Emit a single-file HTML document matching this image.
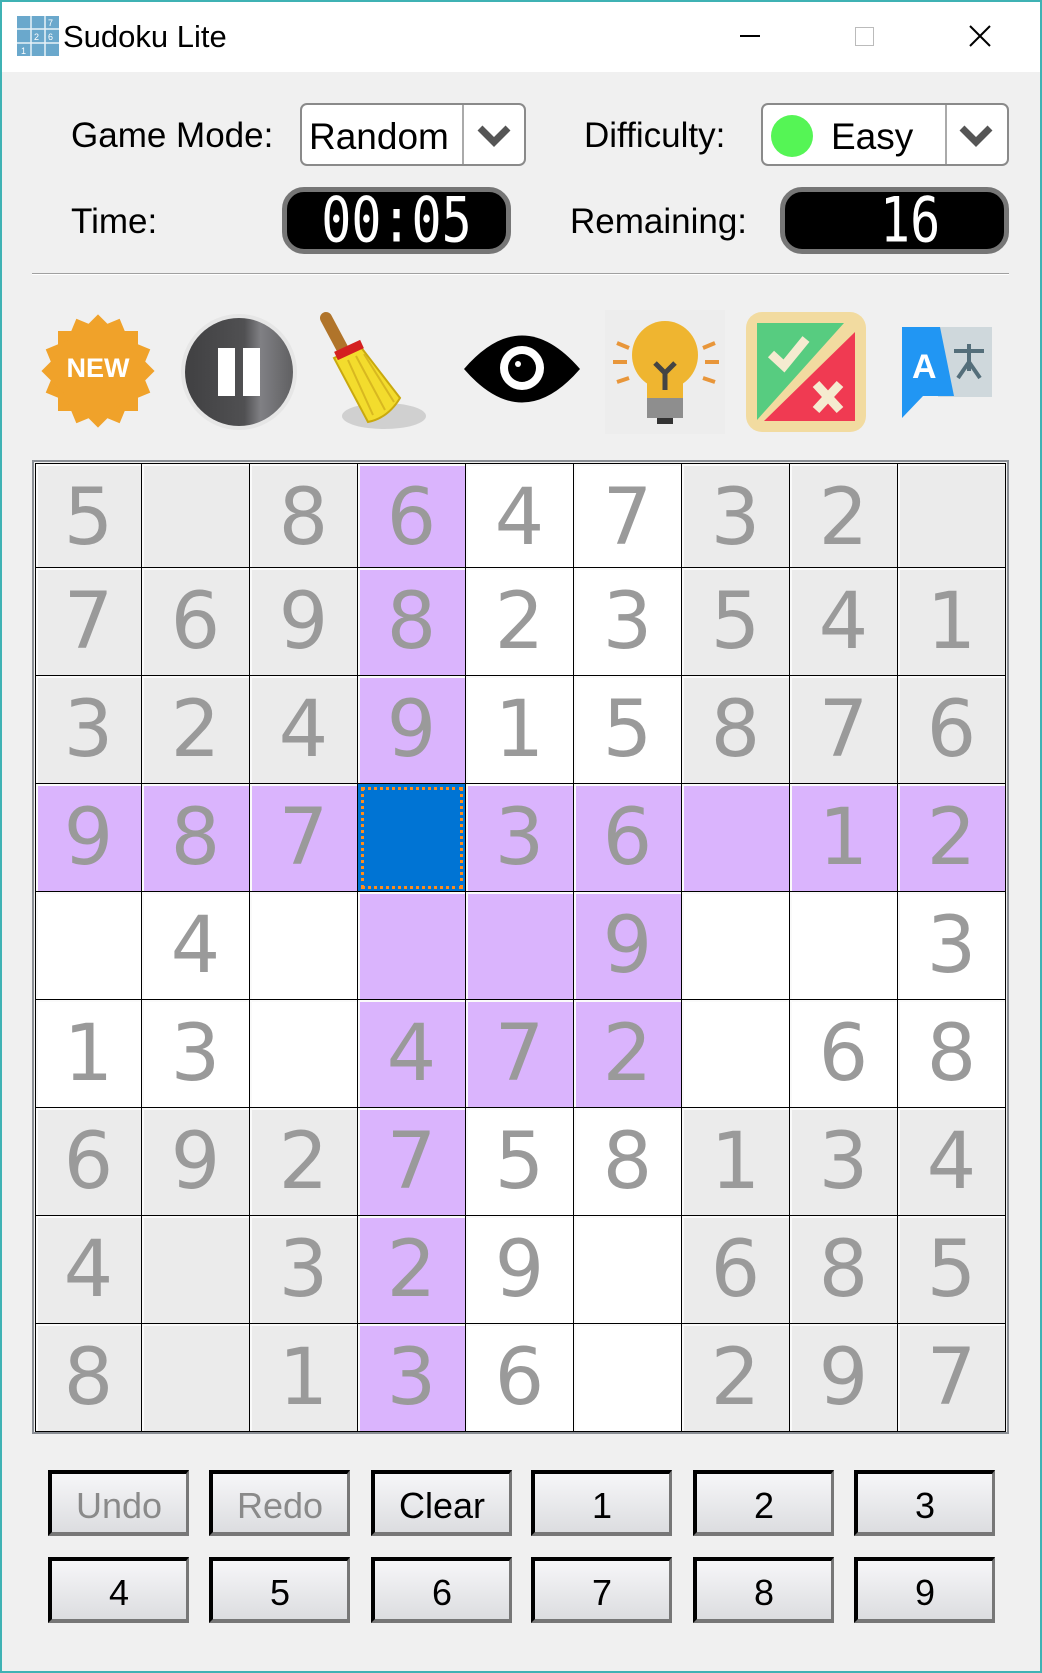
<!DOCTYPE html>
<html><head><meta charset="utf-8"><style>
*{margin:0;padding:0;box-sizing:border-box}
body{width:1042px;height:1673px;background:#f0f0f0;position:relative;overflow:hidden;font-family:"DejaVu Sans","Liberation Sans",sans-serif}
.frame{position:absolute;left:0;top:0;width:1042px;height:1673px;border:2px solid #3fb2b4;pointer-events:none;z-index:10}
.title{position:absolute;left:0;top:0;width:1042px;height:72px;background:#fff}
.abs{position:absolute}
.lbl{position:absolute;font-size:35px;color:#000;font-family:"Liberation Sans",sans-serif;line-height:40px}
.combo{position:absolute;background:#fff;border:2px solid #8a8a8a;border-radius:7px}
.lcd{position:absolute;background:#000;border:5px solid #767676;border-radius:22px;color:#fff;font-family:"DejaVu Sans Mono",monospace;font-size:50px;line-height:56px;text-align:center;letter-spacing:0px}
.lcd span{display:inline-block;transform:scaleY(1.25)}
.grid{position:absolute;left:35px;top:463px;display:grid;grid-template-columns:106px repeat(8,108px);grid-template-rows:104px repeat(8,108px);border-left:1px solid #000;border-top:1px solid #000}
.grid div{border-right:1.5px solid #000;border-bottom:1.5px solid #000;box-shadow:inset 2px 2px 0 #fafafa;font-size:78px;color:#9a9a9a;text-align:center;line-height:108px;font-family:"DejaVu Sans",sans-serif}
.g{background:#ebebeb}.w{background:#fff}.p{background:#dab4fd}
.grid div.s{background:#0074d4;box-shadow:none;outline:3px dotted #ff8c1a;outline-offset:-6px}
.btn{position:absolute;width:141px;height:66px;border-top:4px solid #000;border-left:4px solid #000;border-right:3px solid #777;border-bottom:4px solid #777;background:linear-gradient(#f6f6f8,#dcdde0);font-family:"Liberation Sans",sans-serif;font-size:36px;text-align:center;line-height:64px;color:#000}
.dis{color:#8a8a8a}
</style></head><body>
<div class="title"></div>
<svg class="abs" style="left:17px;top:16px" width="42" height="40" viewBox="0 0 42 40"><rect width="42" height="40" fill="#6aa8cc"/><g stroke="#e8f2f8" stroke-width="1.5"><line x1="14" y1="0" x2="14" y2="40"/><line x1="28" y1="0" x2="28" y2="40"/><line x1="0" y1="13" x2="42" y2="13"/><line x1="0" y1="27" x2="42" y2="27"/></g><g fill="#fff" font-size="9" font-family="Liberation Sans"><text x="31" y="10">7</text><text x="17" y="24">2</text><text x="31" y="24">6</text><text x="4" y="38">1</text></g></svg>
<div class="abs" style="left:63px;top:19px;font-size:31px;font-family:'Liberation Sans',sans-serif">Sudoku Lite</div>
<div class="abs" style="left:740px;top:35px;width:20px;height:2px;background:#000"></div>
<div class="abs" style="left:855px;top:27px;width:19px;height:19px;border:1.5px solid #bbb"></div>
<svg class="abs" style="left:969px;top:25px" width="22" height="22"><path d="M1 1L21 21M21 1L1 21" stroke="#000" stroke-width="2"/></svg>

<div class="lbl" style="left:71px;top:116px">Game Mode:</div>
<div class="combo" style="left:300px;top:103px;width:226px;height:63px"><div class="abs" style="left:7px;top:11px;font-size:37px;font-family:'Liberation Sans',sans-serif">Random</div><div class="abs" style="left:160px;top:0;width:2px;height:59px;background:#aaa"></div><svg class="abs" style="left:175px;top:20px" width="34" height="22"><path d="M3 3L17 17L31 3" stroke="#555" stroke-width="7" fill="none"/></svg></div>
<div class="lbl" style="left:584px;top:116px">Difficulty:</div>
<div class="combo" style="left:761px;top:103px;width:248px;height:63px"><div class="abs" style="left:8px;top:10px;width:42px;height:42px;border-radius:50%;background:#55f555"></div><div class="abs" style="left:68px;top:11px;font-size:37px;font-family:'Liberation Sans',sans-serif">Easy</div><div class="abs" style="left:182px;top:0;width:2px;height:59px;background:#aaa"></div><svg class="abs" style="left:196px;top:20px" width="34" height="22"><path d="M3 3L17 17L31 3" stroke="#555" stroke-width="7" fill="none"/></svg></div>

<div class="lbl" style="left:71px;top:202px">Time:</div>
<div class="lcd" style="left:282px;top:187px;width:229px;height:67px"><span>00:05</span></div>
<div class="lbl" style="left:570px;top:202px">Remaining:</div>
<div class="lcd" style="left:780px;top:187px;width:229px;height:67px;text-align:left;padding-left:95px"><span>16</span></div>
<div class="abs" style="left:32px;top:273px;width:977px;height:2px;background:#a0a0a0;border-bottom:1px solid #fff"></div>

<!-- NEW -->
<div class="abs" style="left:40px;top:313px;width:116px;height:116px">
<div class="abs" style="left:18px;top:18px;width:80px;height:80px;background:#f0a22a"></div>
<div class="abs" style="left:18px;top:18px;width:80px;height:80px;background:#f0a22a;transform:rotate(22.5deg)"></div>
<div class="abs" style="left:18px;top:18px;width:80px;height:80px;background:#f0a22a;transform:rotate(45deg)"></div>
<div class="abs" style="left:18px;top:18px;width:80px;height:80px;background:#f0a22a;transform:rotate(67.5deg)"></div>
<div class="abs" style="left:0;top:40px;width:116px;text-align:center;color:#fff;font-weight:bold;font-size:27px;font-family:'Liberation Sans',sans-serif">NEW</div></div>
<!-- pause -->
<div class="abs" style="left:181px;top:314px;width:116px;height:116px;border-radius:50%;background:#e6e6e6"></div>
<div class="abs" style="left:185px;top:318px;width:108px;height:108px;border-radius:50%;background:linear-gradient(90deg,#404042 0%,#505052 55%,#808084 70%,#606062 100%)"></div>
<div class="abs" style="left:218px;top:348px;width:17px;height:48px;background:#fff"></div>
<div class="abs" style="left:243px;top:348px;width:17px;height:48px;background:#fff"></div>
<!-- broom -->
<svg class="abs" style="left:318px;top:310px" width="110" height="124"><ellipse cx="66" cy="106" rx="42" ry="13" fill="#bbb" opacity=".6"/><path d="M8 8L24 38" stroke="#b0742a" stroke-width="12" stroke-linecap="round"/><path d="M16 48L42 36L82 88Q70 108 50 112Z" fill="#f3dc2d" stroke="#c9a90f" stroke-width="2"/><path d="M18 46L44 34" stroke="#d42020" stroke-width="9"/><path d="M30 50L55 105M38 46L67 100M46 44L76 92" stroke="#d8b820" stroke-width="2"/></svg>
<!-- eye -->
<svg class="abs" style="left:462px;top:332px" width="120" height="74"><path d="M2 37Q60 -30 118 37Q60 104 2 37Z" fill="#000"/><circle cx="60" cy="36" r="22" fill="#fff"/><circle cx="60" cy="36" r="14" fill="#000"/><circle cx="56" cy="32" r="3" fill="#fff"/></svg>
<!-- bulb -->
<svg class="abs" style="left:605px;top:310px" width="120" height="124"><rect width="120" height="124" fill="#ededed"/><ellipse cx="60" cy="45" rx="33" ry="34" fill="#efb530"/><rect x="42" y="60" width="36" height="28" fill="#efb530"/><rect x="42" y="88" width="36" height="20" fill="#8e8e8e"/><rect x="52" y="108" width="16" height="6" fill="#333"/><path d="M50 53L60 63L70 53M60 63V80" stroke="#444" stroke-width="5" fill="none"/><g stroke="#e8963a" stroke-width="4"><line x1="8" y1="52" x2="22" y2="52"/><line x1="100" y1="52" x2="114" y2="52"/><line x1="12" y1="33" x2="24" y2="38"/><line x1="110" y1="33" x2="98" y2="38"/><line x1="12" y1="72" x2="24" y2="68"/><line x1="110" y1="72" x2="98" y2="68"/></g></svg>
<!-- check -->
<svg class="abs" style="left:746px;top:312px" width="120" height="120"><rect width="120" height="120" rx="16" fill="#f2dba0"/><path d="M11 11H98L11 108Z" fill="#57cc80"/><path d="M109 20V109H18Z" fill="#f03a52"/><path d="M25 42L38 54L60 27" stroke="#f5ebd0" stroke-width="9" fill="none"/><path d="M70 72L94 98M94 72L70 98" stroke="#f5ebd0" stroke-width="9"/></svg>
<!-- translate -->
<svg class="abs" style="left:902px;top:326px" width="92" height="92"><rect x="36" y="1" width="54" height="70" fill="#cfd8dc"/><path d="M0 1H38L52 70H21L0 92Z" fill="#2196f3"/><text x="10" y="52" fill="#fff" font-size="34" font-weight="bold" font-family="Liberation Sans">A</text><path d="M52 25H82M67 18V45M56 52L67 36L78 52" stroke="#546e7a" stroke-width="4" fill="none"/></svg>

<div class="abs" style="left:32px;top:460px;width:977px;height:974px;border:2px solid #8a8e94"></div>
<div class="grid">
<div class="g">5</div><div class="g"></div><div class="g">8</div><div class="p">6</div><div class="w">4</div><div class="w">7</div><div class="g">3</div><div class="g">2</div><div class="g"></div>
<div class="g">7</div><div class="g">6</div><div class="g">9</div><div class="p">8</div><div class="w">2</div><div class="w">3</div><div class="g">5</div><div class="g">4</div><div class="g">1</div>
<div class="g">3</div><div class="g">2</div><div class="g">4</div><div class="p">9</div><div class="w">1</div><div class="w">5</div><div class="g">8</div><div class="g">7</div><div class="g">6</div>
<div class="p">9</div><div class="p">8</div><div class="p">7</div><div class="s"></div><div class="p">3</div><div class="p">6</div><div class="p"></div><div class="p">1</div><div class="p">2</div>
<div class="w"></div><div class="w">4</div><div class="w"></div><div class="p"></div><div class="p"></div><div class="p">9</div><div class="w"></div><div class="w"></div><div class="w">3</div>
<div class="w">1</div><div class="w">3</div><div class="w"></div><div class="p">4</div><div class="p">7</div><div class="p">2</div><div class="w"></div><div class="w">6</div><div class="w">8</div>
<div class="g">6</div><div class="g">9</div><div class="g">2</div><div class="p">7</div><div class="w">5</div><div class="w">8</div><div class="g">1</div><div class="g">3</div><div class="g">4</div>
<div class="g">4</div><div class="g"></div><div class="g">3</div><div class="p">2</div><div class="w">9</div><div class="w"></div><div class="g">6</div><div class="g">8</div><div class="g">5</div>
<div class="g">8</div><div class="g"></div><div class="g">1</div><div class="p">3</div><div class="w">6</div><div class="w"></div><div class="g">2</div><div class="g">9</div><div class="g">7</div>
</div>

<div class="btn dis" style="left:48px;top:1470px">Undo</div>
<div class="btn dis" style="left:209px;top:1470px">Redo</div>
<div class="btn" style="left:371px;top:1470px">Clear</div>
<div class="btn" style="left:531px;top:1470px">1</div>
<div class="btn" style="left:693px;top:1470px">2</div>
<div class="btn" style="left:854px;top:1470px">3</div>
<div class="btn" style="left:48px;top:1557px">4</div>
<div class="btn" style="left:209px;top:1557px">5</div>
<div class="btn" style="left:371px;top:1557px">6</div>
<div class="btn" style="left:531px;top:1557px">7</div>
<div class="btn" style="left:693px;top:1557px">8</div>
<div class="btn" style="left:854px;top:1557px">9</div>
<div class="frame"></div>
</body></html>
